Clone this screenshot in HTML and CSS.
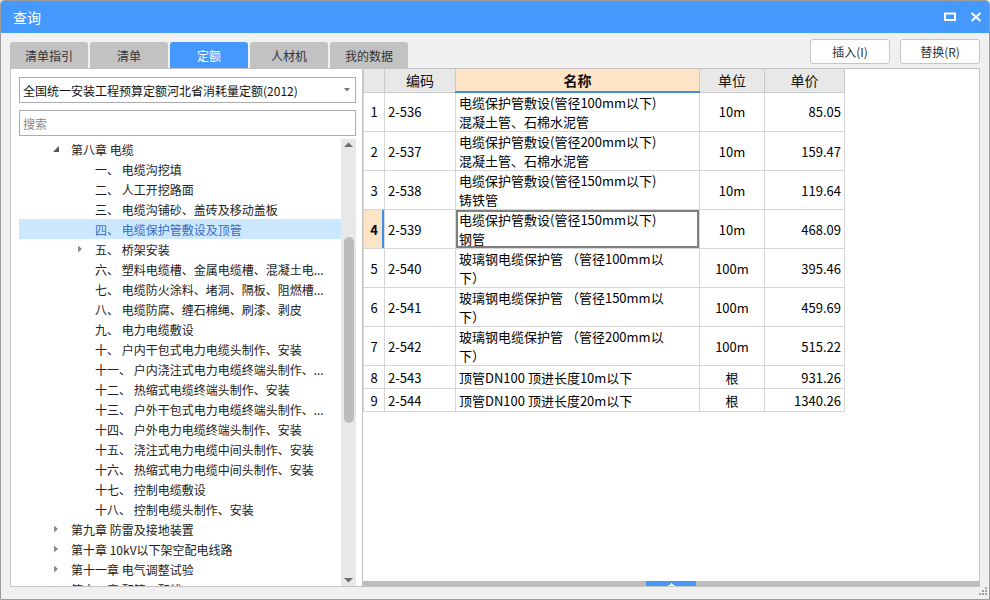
FILE: index.html
```html
<!DOCTYPE html>
<html lang="zh-CN">
<head>
<meta charset="utf-8">
<title>查询</title>
<link rel="stylesheet" href="styles.css">
</head>
<body>
<div class="window">
  <div class="titlebar">
    <span class="title">查询</span>
    <div class="title-btns">
      <svg class="ico" width="12" height="10" viewBox="0 0 12 10"><rect x="1" y="1.5" width="10" height="6.5" fill="none" stroke="#fff" stroke-width="2"/></svg>
      <svg class="ico" width="12" height="10" viewBox="0 0 12 10"><path d="M1.5 1 L10.5 9 M10.5 1 L1.5 9" stroke="#fff" stroke-width="2" fill="none"/></svg>
    </div>
  </div>
  <div class="body">
    <div class="toolbar">
      <div class="tabs">
        <div class="tab">清单指引</div>
        <div class="tab">清单</div>
        <div class="tab active">定额</div>
        <div class="tab">人材机</div>
        <div class="tab">我的数据</div>
      </div>
      <div class="actions">
        <div class="btn">插入(I)</div>
        <div class="btn">替换(R)</div>
      </div>
    </div>
    <div class="panels">
      <div class="left">
        <div class="select">
          <span>全国统一安装工程预算定额河北省消耗量定额(2012)</span>
          <svg width="6" height="4" viewBox="0 0 6 4"><path d="M0 0 H6 L3 3.5 Z" fill="#777"/></svg>
        </div>
        <div class="search">搜索</div>
        <div class="tree-wrap">
          <div class="tree">
            <div class="row l1"><span class="arrow"><svg width="8" height="8" viewBox="0 0 8 8"><path d="M7 1 V7 H1 Z" fill="#555"/></svg></span><span class="label">第八章 电缆</span></div>
            <div class="row l2"><span class="arrow"></span><span class="label">一、 电缆沟挖填</span></div>
            <div class="row l2"><span class="arrow"></span><span class="label">二、 人工开挖路面</span></div>
            <div class="row l2"><span class="arrow"></span><span class="label">三、 电缆沟铺砂、盖砖及移动盖板</span></div>
            <div class="row l2 sel"><span class="arrow"></span><span class="label">四、 电缆保护管敷设及顶管</span></div>
            <div class="row l2"><span class="arrow"><svg width="8" height="8" viewBox="0 0 8 8"><path d="M2 0.5 L6 4 L2 7.5 Z" fill="#8a8a8a"/></svg></span><span class="label">五、 桥架安装</span></div>
            <div class="row l2"><span class="arrow"></span><span class="label">六、 塑料电缆槽、金属电缆槽、混凝土电...</span></div>
            <div class="row l2"><span class="arrow"></span><span class="label">七、 电缆防火涂料、堵洞、隔板、阻燃槽...</span></div>
            <div class="row l2"><span class="arrow"></span><span class="label">八、 电缆防腐、缠石棉绳、刷漆、剥皮</span></div>
            <div class="row l2"><span class="arrow"></span><span class="label">九、 电力电缆敷设</span></div>
            <div class="row l2"><span class="arrow"></span><span class="label">十、 户内干包式电力电缆头制作、安装</span></div>
            <div class="row l2"><span class="arrow"></span><span class="label">十一、 户内浇注式电力电缆终端头制作、...</span></div>
            <div class="row l2"><span class="arrow"></span><span class="label">十二、 热缩式电缆终端头制作、安装</span></div>
            <div class="row l2"><span class="arrow"></span><span class="label">十三、 户外干包式电力电缆终端头制作、...</span></div>
            <div class="row l2"><span class="arrow"></span><span class="label">十四、 户外电力电缆终端头制作、安装</span></div>
            <div class="row l2"><span class="arrow"></span><span class="label">十五、 浇注式电力电缆中间头制作、安装</span></div>
            <div class="row l2"><span class="arrow"></span><span class="label">十六、 热缩式电力电缆中间头制作、安装</span></div>
            <div class="row l2"><span class="arrow"></span><span class="label">十七、 控制电缆敷设</span></div>
            <div class="row l2"><span class="arrow"></span><span class="label">十八、 控制电缆头制作、安装</span></div>
            <div class="row l1"><span class="arrow"><svg width="8" height="8" viewBox="0 0 8 8"><path d="M2 0.5 L6 4 L2 7.5 Z" fill="#8a8a8a"/></svg></span><span class="label">第九章 防雷及接地装置</span></div>
            <div class="row l1"><span class="arrow"><svg width="8" height="8" viewBox="0 0 8 8"><path d="M2 0.5 L6 4 L2 7.5 Z" fill="#8a8a8a"/></svg></span><span class="label">第十章 10kV以下架空配电线路</span></div>
            <div class="row l1"><span class="arrow"><svg width="8" height="8" viewBox="0 0 8 8"><path d="M2 0.5 L6 4 L2 7.5 Z" fill="#8a8a8a"/></svg></span><span class="label">第十一章 电气调整试验</span></div>
            <div class="row l1"><span class="arrow"><svg width="8" height="8" viewBox="0 0 8 8"><path d="M2 0.5 L6 4 L2 7.5 Z" fill="#8a8a8a"/></svg></span><span class="label">第十二章 配管、配线</span></div>
          </div>
          <div class="vscroll">
            <div class="varrow up"><svg width="9" height="5" viewBox="0 0 9 5"><path d="M0 5 L4.5 0.5 L9 5 Z" fill="#6f6f6f"/></svg></div>
            <div class="vthumb"></div>
            <div class="vspace"></div>
            <div class="varrow down"><svg width="9" height="5" viewBox="0 0 9 5"><path d="M0 0 L4.5 4.5 L9 0 Z" fill="#6f6f6f"/></svg></div>
          </div>
        </div>
      </div>
      <div class="right">
        <div class="table-area">
          <table class="grid">
            <colgroup><col class="c-no"><col class="c-code"><col class="c-name"><col class="c-unit"><col class="c-price"></colgroup>
            <thead>
              <tr><th></th><th>编码</th><th class="hl">名称</th><th>单位</th><th>单价</th></tr>
            </thead>
            <tbody>
              <tr class="two"><td class="no">1</td><td class="code">2-536</td><td class="name"><span class="ln">电缆保护管敷设(管径100mm以下)</span><span class="ln">混凝土管、石棉水泥管</span></td><td class="unit">10m</td><td class="price">85.05</td></tr>
              <tr class="two"><td class="no">2</td><td class="code">2-537</td><td class="name"><span class="ln">电缆保护管敷设(管径200mm以下)</span><span class="ln">混凝土管、石棉水泥管</span></td><td class="unit">10m</td><td class="price">159.47</td></tr>
              <tr class="two"><td class="no">3</td><td class="code">2-538</td><td class="name"><span class="ln">电缆保护管敷设(管径150mm以下)</span><span class="ln">铸铁管</span></td><td class="unit">10m</td><td class="price">119.64</td></tr>
              <tr class="two cur"><td class="no">4</td><td class="code">2-539</td><td class="name"><span class="ln">电缆保护管敷设(管径150mm以下)</span><span class="ln">钢管</span></td><td class="unit">10m</td><td class="price">468.09</td></tr>
              <tr class="two"><td class="no">5</td><td class="code">2-540</td><td class="name"><span class="ln">玻璃钢电缆保护管 （管径100mm以</span><span class="ln">下）</span></td><td class="unit">100m</td><td class="price">395.46</td></tr>
              <tr class="two"><td class="no">6</td><td class="code">2-541</td><td class="name"><span class="ln">玻璃钢电缆保护管 （管径150mm以</span><span class="ln">下）</span></td><td class="unit">100m</td><td class="price">459.69</td></tr>
              <tr class="two"><td class="no">7</td><td class="code">2-542</td><td class="name"><span class="ln">玻璃钢电缆保护管 （管径200mm以</span><span class="ln">下）</span></td><td class="unit">100m</td><td class="price">515.22</td></tr>
              <tr class="one"><td class="no">8</td><td class="code">2-543</td><td class="name">顶管DN100 顶进长度10m以下</td><td class="unit">根</td><td class="price">931.26</td></tr>
              <tr class="one"><td class="no">9</td><td class="code">2-544</td><td class="name">顶管DN100 顶进长度20m以下</td><td class="unit">根</td><td class="price">1340.26</td></tr>
            </tbody>
          </table>
        </div>
        <div class="hscroll"><div class="hthumb"><svg width="7" height="4" viewBox="0 0 7 4"><path d="M0 4 H7 V3 H5 V2 H4 V1 H3 V2 H2 V3 H0 Z" fill="#fff"/></svg></div></div>
      </div>
    </div>
  </div>
  <svg class="grip" width="9" height="9" viewBox="0 0 9 9">
    <rect x="6" y="0" width="2" height="2" fill="#a0a0a0"/>
    <rect x="3" y="3" width="2" height="2" fill="#a0a0a0"/>
    <rect x="6" y="3" width="2" height="2" fill="#a0a0a0"/>
    <rect x="0" y="6" width="2" height="2" fill="#a0a0a0"/>
    <rect x="3" y="6" width="2" height="2" fill="#a0a0a0"/>
    <rect x="6" y="6" width="2" height="2" fill="#a0a0a0"/>
  </svg>
</div>
</body>
</html>
```
FILE: styles.css
```css
* { box-sizing: border-box; }
html, body { margin: 0; padding: 0; }
body {
  font-family: "Noto Sans CJK SC", "Microsoft YaHei", sans-serif;
  font-size: 12px;
  color: #222;
  background: #ffffff;
}
.window {
  width: 990px;
  height: 600px;
  border: 1px solid #9c9c9c;
  border-radius: 4px 4px 0 0;
  background: #f0f0f0;
  display: flex;
  flex-direction: column;
  position: relative;
  overflow: hidden;
}
.titlebar {
  height: 32px;
  flex: none;
  background: #4599fc;
  display: flex;
  align-items: center;
  justify-content: space-between;
  padding: 0 7px 0 12px;
  color: #fff;
}
.title { font-size: 14px; line-height: 32px; }
.title-btns { display: flex; gap: 14px; align-items: center; }
.ico { display: block; }

.body {
  flex: 1;
  display: flex;
  flex-direction: column;
  padding: 6px 9px 12px 9px;
  min-height: 0;
}
.toolbar {
  height: 29px;
  flex: none;
  display: flex;
  justify-content: space-between;
}
.tabs { display: flex; gap: 2px; align-items: flex-end; }
.tab {
  width: 78px;
  height: 26px;
  background: #c2c2c2;
  border-radius: 3px 3px 0 0;
  display: flex;
  align-items: center;
  justify-content: center;
  color: #333;
  font-size: 12px;
}
.tab.active { background: #4599fc; color: #fff; }
.actions { display: flex; gap: 10px; align-items: flex-start; }
.btn {
  width: 80px;
  height: 25px;
  background: #fff;
  border: 1px solid #c6c6c6;
  border-radius: 3px;
  display: flex;
  align-items: center;
  justify-content: center;
  font-size: 12px;
  color: #333;
}

.panels { flex: 1; display: flex; min-height: 0; }
.left {
  width: 352px;
  flex: none;
  background: #fff;
  border: 1px solid #c4c4c4;
  border-right: none;
  display: flex;
  flex-direction: column;
  padding: 8px 6px 0 8px;
  min-height: 0;
}
.select {
  height: 26px;
  flex: none;
  border: 1px solid #ababab;
  display: flex;
  align-items: center;
  justify-content: space-between;
  padding: 0 5px 0 3px;
  color: #111;
}
.search {
  height: 26px;
  flex: none;
  margin-top: 7px;
  border: 1px solid #ababab;
  display: flex;
  align-items: center;
  padding-left: 3px;
  color: #8a8a8a;
}
.tree-wrap { flex: 1; display: flex; margin-top: 3px; min-height: 0; }
.tree { flex: 1; overflow: hidden; min-width: 0; }
.row {
  height: 20px;
  display: flex;
  align-items: center;
  white-space: nowrap;
  color: #222;
}
.row.l1 { padding-left: 29px; }
.row.l2 { padding-left: 53px; }
.row.sel { background: #cce8ff; color: #3a6cc0; }
.arrow { width: 16px; height: 20px; flex: none; display: flex; align-items: center; justify-content: center; }
.arrow svg { display: block; }
.label { margin-left: 7px; }

.vscroll {
  width: 15px;
  flex: none;
  background: #e8e8e8;
  display: flex;
  flex-direction: column;
  align-items: center;
}
.varrow { height: 14px; flex: none; display: flex; justify-content: center; }
.varrow.up { align-items: flex-start; padding-top: 3px; }
.varrow.down { align-items: flex-end; padding-bottom: 3px; }
.varrow svg { display: block; }
.vthumb {
  width: 10px;
  height: 186px;
  margin-top: 84px;
  border-radius: 5px;
  background: #bcbcbc;
  flex: none;
}
.vspace { flex: 1; }

.right {
  flex: 1;
  min-width: 0;
  background: #fff;
  border: 1px solid #c4c4c4;
  display: flex;
  flex-direction: column;
}
.table-area { flex: 1; overflow: hidden; }
.grid {
  border-collapse: collapse;
  table-layout: fixed;
  width: 481px;
  font-size: 13px;
  line-height: 19px;
  color: #000;
}
.c-no { width: 21px; }
.c-code { width: 71px; }
.c-name { width: 244px; }
.c-unit { width: 65px; }
.c-price { width: 80px; }
.grid th {
  height: 23px;
  padding: 0;
  background: #e8e8e8;
  border: 1px solid #c8c8c8;
  border-top: none;
  font-weight: normal;
  font-size: 14px;
  line-height: 20px;
  color: #111;
}
.grid th.hl {
  background: #fde4c6;
  font-weight: bold;
  border-bottom: 2px solid #3d8ee8;
}
.grid td {
  border: 1px solid #d6d6d6;
  padding: 0 3px;
  vertical-align: middle;
  white-space: nowrap;
  overflow: hidden;
}
.grid .ln { display: block; height: 19px; line-height: 19px; }
.grid tr.two td { height: 39px; }
.grid tr.one td { height: 23px; }
.grid td.no { text-align: center; padding: 0; }
.grid td.unit { text-align: center; }
.grid td.price { text-align: right; }
.grid tr.cur td.no {
  background: #fde4c6;
  font-weight: bold;
  box-shadow: inset -2px 0 0 #3d8ee8;
}
.grid tr.cur td.name { box-shadow: inset 0 0 0 2px #7f7f7f; }

.hscroll {
  height: 5px;
  flex: none;
  background: #bdbdbd;
  display: flex;
}
.hthumb {
  width: 50px;
  margin-left: 283px;
  background: #4599fc;
  display: flex;
  align-items: flex-end;
  justify-content: center;
}
.hthumb svg { display: block; }
.grip { position: absolute; right: 1px; bottom: 3px; display: block; }
```
